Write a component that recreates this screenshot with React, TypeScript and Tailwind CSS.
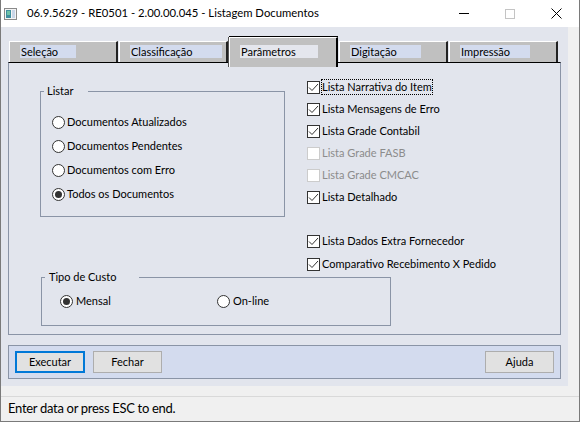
import React from 'react';

const tabs = [
  { label: 'Seleção', w: 'w-[56px]' },
  { label: 'Classificação', w: 'w-[92px]' },
  { label: 'Parâmetros', w: 'w-[78px]', active: true },
  { label: 'Digitação', w: 'w-[71px]' },
  { label: 'Impressão', w: 'w-[70px]' },
];

const Radio = ({ checked }: { checked?: boolean }) => (
  <span className="w-[13px] h-[13px] rounded-full border border-[#333333] bg-white flex items-center justify-center shrink-0">
    {checked && <span className="w-[7px] h-[7px] rounded-full bg-[#333333]" />}
  </span>
);

const Check = ({ checked, disabled }: { checked?: boolean; disabled?: boolean }) => (
  <span
    className={`w-[13px] h-[13px] border bg-white flex items-center justify-center shrink-0 ${
      disabled ? 'border-[#cccccc]' : 'border-[#333333]'
    }`}
  >
    {checked && (
      <svg width="11" height="11" viewBox="0 0 11 11">
        <path d="M1 5.5 L4 8.5 L10 2" fill="none" stroke="#333333" strokeWidth="1" />
      </svg>
    )}
  </span>
);

const checks = [
  { label: 'Lista Narrativa do Item', checked: true, focus: true },
  { label: 'Lista Mensagens de Erro', checked: true },
  { label: 'Lista Grade Contabil', checked: true },
  { label: 'Lista Grade FASB', disabled: true },
  { label: 'Lista Grade CMCAC', disabled: true },
  { label: 'Lista Detalhado', checked: true },
];

const CheckRow = ({ label, checked, disabled, focus }: { label: string; checked?: boolean; disabled?: boolean; focus?: boolean }) => (
  <div className="h-[22px] flex items-center">
    <Check checked={checked} disabled={disabled} />
    <span
      className={`ml-[1px] leading-[14px] ${focus ? 'border border-dotted border-black' : 'border border-transparent'} ${
        disabled ? 'text-[#8c8c8c]' : 'text-black'
      }`}
    >
      {label}
    </span>
  </div>
);

const Button = ({ label, focus, className = '' }: { label: string; focus?: boolean; className?: string }) => (
  <button
    className={`h-[22px] bg-[#e1e1e1] flex items-center justify-center ${
      focus ? 'border-2 border-[#0078d7]' : 'border border-[#adadad]'
    } ${className}`}
  >
    {label}
  </button>
);

export default function App() {
  return (
    <div className="w-[580px] h-[422px] flex flex-col bg-[#f0f0f0] border-x border-b border-[#7a7a7a] overflow-hidden font-['Lato','Liberation_Sans',sans-serif] text-[11px] text-black">
      {/* Title bar */}
      <div className="h-[27px] bg-white flex items-center shrink-0">
        <svg className="ml-[3px]" width="13" height="12" viewBox="0 0 13 12">
          <rect x="0.5" y="0.5" width="12" height="11" fill="#f4f4f4" stroke="#8a8a8a" />
          <rect x="2" y="2" width="5" height="8" fill="#3f8f9e" />
          <rect x="3" y="3" width="3" height="4" fill="#6fc2a8" />
          <rect x="8" y="2" width="3" height="8" fill="#c9d6e8" />
        </svg>
        <span className="ml-[10px] text-[11.3px] text-black">
          06.9.5629 - RE0501 - 2.00.00.045 - Listagem Documentos
        </span>
        <div className="ml-auto flex h-full">
          <div className="w-[46px] flex items-center justify-center">
            <span className="w-[10px] h-px bg-black" />
          </div>
          <div className="w-[46px] flex items-center justify-center">
            <span className="w-[10px] h-[10px] border border-[#c4c4c4]" />
          </div>
          <div className="w-[46px] flex items-center justify-center">
            <svg width="11" height="11" viewBox="0 0 11 11">
              <path d="M0.5 0.5 L10.5 10.5 M10.5 0.5 L0.5 10.5" stroke="#000" strokeWidth="1" />
            </svg>
          </div>
        </div>
      </div>

      {/* Body */}
      <div className="flex-1 flex flex-col">
        <div className="w-[567px] h-[359px] bg-[#e2e5ed] pt-[10px] pl-[7px] flex flex-col">
          {/* Tabs */}
          <div className="h-[25px] flex items-end gap-[1px] ml-[1px] relative z-10">
            {tabs.map((t) =>
              t.active ? (
                <div
                  key={t.label}
                  className="w-[109px] h-[30px] -mb-[5px] bg-[#c0c0c0] border-t border-l border-white border-r-2 border-r-black shadow-[0_-1px_0_#000,-1px_0_0_#555] pl-[10px] pt-[7px]"
                >
                  <div className={`${t.w} h-[13px] bg-[#e4e6ed] pl-[1px] leading-[13px]`}>{t.label}</div>
                </div>
              ) : (
                <div
                  key={t.label}
                  className="w-[109px] h-[21px] bg-[#c0c0c0] border-t border-l border-white border-r-2 border-r-[#222222] pl-[10px] pt-[3px]"
                >
                  <div className={`${t.w} h-[13px] bg-[#d3dbee] pl-[1px] leading-[13px]`}>{t.label}</div>
                </div>
              )
            )}
          </div>

          {/* Panel */}
          <div className="w-[553px] h-[273px] border-t border-t-black border-x border-b border-[#8a94a6] flex flex-col">
            <div className="flex">
              {/* Listar */}
              <div className="relative ml-[31px] mt-[28px] w-[245px] h-[126px] border border-[#8a94a6] pt-[18px] pl-[11px]">
                <span className="absolute -top-[8px] left-[3px] w-[44px] h-[14px] leading-[14px] pl-[3px] bg-[#e2e5ed]">
                  Listar
                </span>
                {['Documentos Atualizados', 'Documentos Pendentes', 'Documentos com Erro', 'Todos os Documentos'].map((l, i) => (
                  <div key={l} className="h-[24px] flex items-center">
                    <Radio checked={i === 3} />
                    <span className="ml-[2px]">{l}</span>
                  </div>
                ))}
              </div>

              {/* Checkboxes */}
              <div className="ml-[22px] mt-[13px] flex flex-col">
                {checks.map((c) => (
                  <CheckRow key={c.label} {...c} />
                ))}
                <div className="mt-[22px]">
                  <CheckRow label="Lista Dados Extra Fornecedor" checked />
                </div>
                <div className="mt-[1px]">
                  <CheckRow label="Comparativo Recebimento X Pedido" checked />
                </div>
              </div>
            </div>

            {/* Tipo de Custo */}
            <div className="relative ml-[32px] mt-[2px] w-[350px] h-[49px] border border-[#8a94a6] pl-[18px] flex items-center">
              <span className="absolute -top-[8px] left-[3px] w-[94px] h-[14px] leading-[14px] pl-[4px] bg-[#e2e5ed]">
                Tipo de Custo
              </span>
              <div className="flex items-center w-[157px]">
                <Radio checked />
                <span className="ml-[3px]">Mensal</span>
              </div>
              <div className="flex items-center">
                <Radio />
                <span className="ml-[3px]">On-line</span>
              </div>
            </div>
          </div>

          {/* Button bar */}
          <div className="mt-[10px] w-[553px] h-[34px] bg-[#d3dbee] border border-[#8a94a6] flex items-center px-[6px]">
            <Button label="Executar" focus className="w-[70px]" />
            <Button label="Fechar" className="w-[69px] ml-[8px]" />
            <Button label="Ajuda" className="w-[69px] ml-auto" />
          </div>
        </div>
      </div>

      {/* Status bar */}
      <div className="h-[25px] border-t border-[#d9d9d9] flex items-center pl-[7px] text-[13px] tracking-[-0.3px]">
        Enter data or press ESC to end.
      </div>
    </div>
  );
}
